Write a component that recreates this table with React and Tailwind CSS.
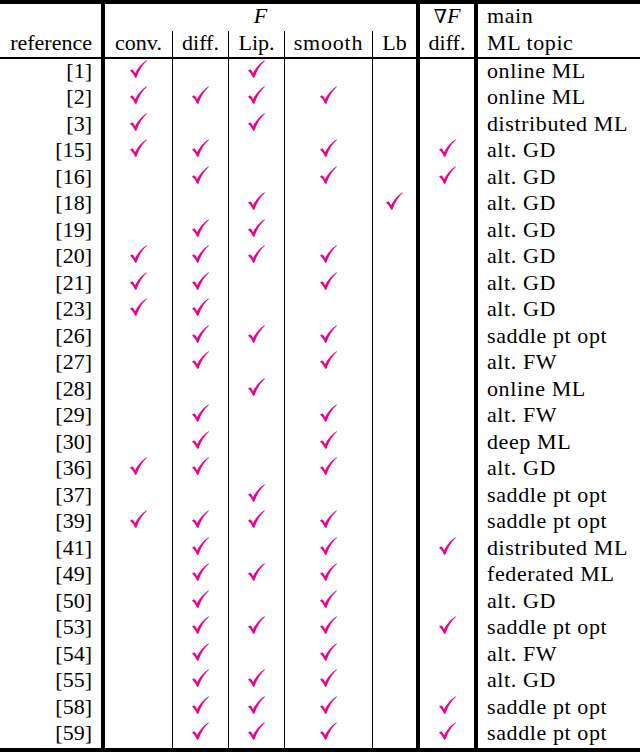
const rows = [
  ['[1]', 'cl', '', 'online ML'],
  ['[2]', 'cdls', '', 'online ML'],
  ['[3]', 'cl', '', 'distributed ML'],
  ['[15]', 'cds', 'g', 'alt. GD'],
  ['[16]', 'ds', 'g', 'alt. GD'],
  ['[18]', 'lb', '', 'alt. GD'],
  ['[19]', 'dl', '', 'alt. GD'],
  ['[20]', 'cdls', '', 'alt. GD'],
  ['[21]', 'cds', '', 'alt. GD'],
  ['[23]', 'cd', '', 'alt. GD'],
  ['[26]', 'dls', '', 'saddle pt opt'],
  ['[27]', 'ds', '', 'alt. FW'],
  ['[28]', 'l', '', 'online ML'],
  ['[29]', 'ds', '', 'alt. FW'],
  ['[30]', 'ds', '', 'deep ML'],
  ['[36]', 'cds', '', 'alt. GD'],
  ['[37]', 'l', '', 'saddle pt opt'],
  ['[39]', 'cdls', '', 'saddle pt opt'],
  ['[41]', 'ds', 'g', 'distributed ML'],
  ['[49]', 'dls', '', 'federated ML'],
  ['[50]', 'ds', '', 'alt. GD'],
  ['[53]', 'dls', 'g', 'saddle pt opt'],
  ['[54]', 'ds', '', 'alt. FW'],
  ['[55]', 'dls', '', 'alt. GD'],
  ['[58]', 'dls', 'g', 'saddle pt opt'],
  ['[59]', 'dls', 'g', 'saddle pt opt'],
];

function Check() {
  return (
    <svg width="17" height="18" viewBox="0 0 17 18" className="mt-[1px]">
      <path
        d="M0 10.8 C1 10 1.8 9.6 2.3 9.6 C3 9.6 3.8 11 5 13.2 C8 7.5 12 3 16.6 0.2 L17 0.7 C12.5 4.5 9 10 6.5 17.4 C6.3 17.9 5.3 17.9 5 17.4 C3.5 14.5 2 12 0 10.8 Z"
        fill="#ec008c"
      />
    </svg>
  );
}

function Cell({ className, on }) {
  return (
    <div className={`flex h-full justify-center items-start ${className}`}>
      {on && <Check />}
    </div>
  );
}

export default function App() {
  return (
    <div className="w-[640px] h-[752px] bg-white text-black text-[22px] font-['Liberation_Serif','Times_New_Roman','DejaVu_Serif',serif]">
      <div className="h-[4px] bg-black" />

      {/* header */}
      <div className="flex h-[53px] leading-[24px]">
        <div className="w-[101px] flex flex-col">
          <div className="h-[26.5px]" />
          <div className="h-[26.5px] text-right pr-[9px]">reference</div>
        </div>
        <div className="w-[315px] border-l-4 border-black flex flex-col">
          <div className="h-[26.5px] text-center italic">F</div>
          <div className="h-[26.5px] flex">
            <div className="w-[67px] text-center">conv.</div>
            <div className="w-[56px] border-l border-black text-center">diff.</div>
            <div className="w-[56px] border-l border-black text-center">Lip.</div>
            <div className="w-[88px] border-l border-black text-center tracking-[0.8px]">smooth</div>
            <div className="w-[44px] border-l border-black text-center">Lb</div>
          </div>
        </div>
        <div className="w-[58px] border-l-4 border-black flex flex-col text-center">
          <div className="h-[26.5px]">
            <span className="text-[19px] font-['DejaVu_Serif',serif]">∇</span>
            <span className="italic">F</span>
          </div>
          <div className="h-[26.5px]">diff.</div>
        </div>
        <div className="flex-1 border-l-4 border-black pl-[9px] flex flex-col tracking-[0.6px]">
          <div className="h-[26.5px]">main</div>
          <div className="h-[26.5px]">ML topic</div>
        </div>
      </div>

      <div className="h-[1.5px] bg-black" />

      {/* body */}
      {rows.map(([ref, f, g, topic]) => (
        <div key={ref} className="flex h-[26.5px] leading-[24px]">
          <div className="w-[101px] text-right pr-[9px]">{ref}</div>
          <Cell className="w-[71px] border-l-4 border-black" on={f.includes('c')} />
          <Cell className="w-[56px] border-l border-black" on={f.includes('d')} />
          <Cell className="w-[56px] border-l border-black" on={f.includes('l')} />
          <Cell className="w-[88px] border-l border-black" on={f.includes('s')} />
          <Cell className="w-[44px] border-l border-black" on={f.includes('b')} />
          <Cell className="w-[58px] border-l-4 border-black" on={g === 'g'} />
          <div className="flex-1 border-l-4 border-black pl-[9px] whitespace-nowrap tracking-[0.6px]">{topic}</div>
        </div>
      ))}

      <div className="h-[4px] bg-black" />
    </div>
  );
}
